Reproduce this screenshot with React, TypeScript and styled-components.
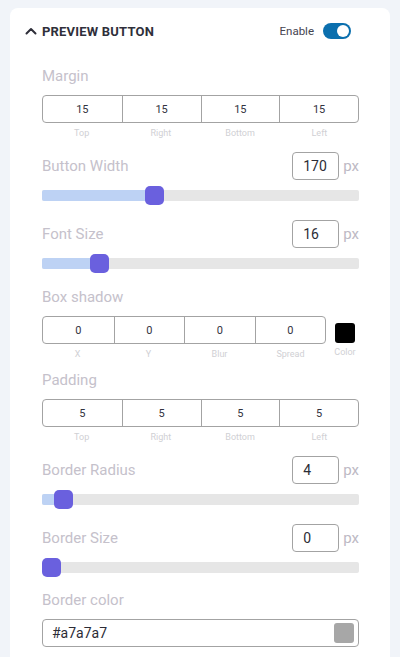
import styled, { createGlobalStyle } from 'styled-components';

const GlobalStyle = createGlobalStyle`
  html, body {
    margin: 0;
    padding: 0;
    background: #f1f4f9;
    font-family: Roboto, 'Liberation Sans', sans-serif;
  }
  * { box-sizing: border-box; }
`;

type Cell = { value: string; label: string };

function Quad({ cells }: { cells: Cell[] }) {
  return (
    <div>
      <QuadBox>
        {cells.map((c) => (
          <QuadCell key={c.label}>{c.value}</QuadCell>
        ))}
      </QuadBox>
      <SubLabels>
        {cells.map((c) => (
          <span key={c.label}>{c.label}</span>
        ))}
      </SubLabels>
    </div>
  );
}

function Slider({ value, min, max }: { value: number; min: number; max: number }) {
  const pct = (value - min) / (max - min);
  return (
    <SliderTrack>
      <SliderFill style={{ width: `calc((100% - 19px) * ${pct} + 9px)` }} />
      <SliderThumb style={{ left: `calc((100% - 19px) * ${pct})` }} />
    </SliderTrack>
  );
}

function SliderField({ label, value, min, max, top }: { label: string; value: number; min: number; max: number; top: number }) {
  return (
    <Section $top={top}>
      <Row>
        <FieldLabel>{label}</FieldLabel>
        <Unit>
          <NumberBox>{value}</NumberBox>
          <span>px</span>
        </Unit>
      </Row>
      <Slider value={value} min={min} max={max} />
    </Section>
  );
}

function App() {
  return (
    <>
      <GlobalStyle />
      <Card>
        <Header>
          <Title>
            <svg width="12" height="8" viewBox="0 0 12 8">
              <path d="M1.5 6.5 L6 2 L10.5 6.5" fill="none" stroke="#2f2f3a" strokeWidth="2" strokeLinecap="round" strokeLinejoin="round" />
            </svg>
            PREVIEW BUTTON
          </Title>
          <ToggleWrap>
            Enable
            <Toggle $on />
          </ToggleWrap>
        </Header>

        <Body>
          <Section $top={0}>
            <FieldLabel>Margin</FieldLabel>
            <Quad
              cells={[
                { value: '15', label: 'Top' },
                { value: '15', label: 'Right' },
                { value: '15', label: 'Bottom' },
                { value: '15', label: 'Left' },
              ]}
            />
          </Section>

          <SliderField label="Button Width" value={170} min={0} max={490} top={13} />
          <SliderField label="Font Size" value={16} min={0} max={100} top={16} />

          <Section $top={15}>
            <FieldLabel>Box shadow</FieldLabel>
            <ShadowRow>
              <Quad
                cells={[
                  { value: '0', label: 'X' },
                  { value: '0', label: 'Y' },
                  { value: '0', label: 'Blur' },
                  { value: '0', label: 'Spread' },
                ]}
              />
              <ColorPick>
                <Swatch $color="#000000" />
                <span>Color</span>
              </ColorPick>
            </ShadowRow>
          </Section>

          <Section $top={10}>
            <FieldLabel>Padding</FieldLabel>
            <Quad
              cells={[
                { value: '5', label: 'Top' },
                { value: '5', label: 'Right' },
                { value: '5', label: 'Bottom' },
                { value: '5', label: 'Left' },
              ]}
            />
          </Section>

          <SliderField label="Border Radius" value={4} min={0} max={100} top={13} />
          <SliderField label="Border Size" value={0} min={0} max={20} top={16} />

          <Section $top={14}>
            <FieldLabel>Border color</FieldLabel>
            <ColorInput>
              <span>#a7a7a7</span>
              <Swatch $color="#a7a7a7" />
            </ColorInput>
          </Section>
        </Body>
      </Card>
    </>
  );
}

export default App;

const Card = styled.div`
  margin: 8px 10px 0 10px;
  padding-top: 15px;
  min-height: 660px;
  background: #ffffff;
  border-radius: 8px 8px 0 0;
`;

const Header = styled.div`
  display: flex;
  align-items: center;
  justify-content: space-between;
  height: 16px;
  padding: 0 39px 0 15px;
`;

const Title = styled.div`
  display: flex;
  align-items: center;
  gap: 5px;
  font-size: 13px;
  font-weight: 700;
  letter-spacing: 0.2px;
  color: #2f2f3a;

  svg {
    margin-top: -1px;
  }
`;

const ToggleWrap = styled.div`
  display: flex;
  align-items: center;
  gap: 9px;
  font-size: 11.5px;
  color: #444450;
`;

const Toggle = styled.span<{ $on?: boolean }>`
  position: relative;
  width: 28px;
  height: 16px;
  border-radius: 8px;
  background: ${(p) => (p.$on ? '#0b6fae' : '#c9c9c9')};

  &::after {
    content: '';
    position: absolute;
    top: 2px;
    left: ${(p) => (p.$on ? '14px' : '2px')};
    width: 12px;
    height: 12px;
    border-radius: 50%;
    background: #ffffff;
  }
`;

const Body = styled.div`
  display: flex;
  flex-direction: column;
  padding: 27px 31px 0 32px;
`;

const Section = styled.div<{ $top: number }>`
  display: flex;
  flex-direction: column;
  margin-top: ${(p) => p.$top}px;
`;

const FieldLabel = styled.div`
  font-size: 15px;
  line-height: 20px;
  color: #c5c1cb;
`;

const QuadBox = styled.div`
  display: grid;
  grid-template-columns: repeat(4, 1fr);
  height: 28px;
  margin-top: 9px;
  border: 1px solid #a3a3a3;
  border-radius: 4px;
`;

const QuadCell = styled.div`
  display: flex;
  align-items: center;
  justify-content: center;
  font-size: 11px;
  color: #333340;

  & + & {
    border-left: 1px solid #a3a3a3;
  }
`;

const SubLabels = styled.div`
  display: grid;
  grid-template-columns: repeat(4, 1fr);
  margin-top: 4px;
  font-size: 9px;
  line-height: 12px;
  color: #d0d0d4;
  text-align: center;
`;

const Row = styled.div`
  display: flex;
  align-items: center;
  justify-content: space-between;
  height: 28px;
`;

const Unit = styled.div`
  display: flex;
  align-items: center;
  gap: 4px;
  font-size: 15px;
  color: #bdb9c4;
`;

const NumberBox = styled.div`
  width: 47px;
  height: 28px;
  padding-left: 10px;
  display: flex;
  align-items: center;
  border: 1px solid #a3a3a3;
  border-radius: 4px;
  font-size: 14px;
  color: #2c2c36;
`;

const SliderTrack = styled.div`
  position: relative;
  height: 11px;
  margin: 10px 0 3px;
  border-radius: 2px;
  background: #e6e6e6;
`;

const SliderFill = styled.div`
  position: absolute;
  left: 0;
  top: 0;
  bottom: 0;
  border-radius: 2px;
  background: #bdd2f4;
`;

const SliderThumb = styled.div`
  position: absolute;
  top: -4px;
  width: 19px;
  height: 19px;
  border-radius: 5px;
  background: #6a60de;
`;

const ShadowRow = styled.div`
  display: grid;
  grid-template-columns: 1fr 28px;
  gap: 5px;

  > div:first-child {
    min-width: 0;
  }
`;

const ColorPick = styled.div`
  display: flex;
  flex-direction: column;
  align-items: center;
  padding-top: 16px;
  font-size: 9px;
  line-height: 12px;
  color: #d0d0d4;

  span {
    margin-top: 3px;
  }
`;

const Swatch = styled.div<{ $color: string }>`
  width: 20px;
  height: 20px;
  border-radius: 3px;
  background: ${(p) => p.$color};
`;

const ColorInput = styled.div`
  display: flex;
  align-items: center;
  justify-content: space-between;
  height: 28px;
  margin-top: 9px;
  padding: 0 4px 0 9px;
  border: 1px solid #a3a3a3;
  border-radius: 4px;
  font-size: 14px;
  color: #2c2c36;
`;
